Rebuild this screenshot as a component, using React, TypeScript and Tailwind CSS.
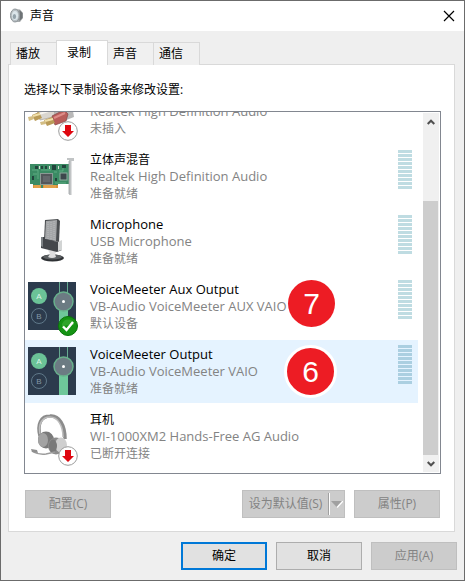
import type { ReactNode } from "react";

function Arrow({ up = false }: { up?: boolean }) {
  return (
    <svg viewBox="0 0 8 6" className="h-[6px] w-[8px]" aria-hidden="true">
      <path d={up ? "M0.7 5 4 1.7 7.3 5" : "M0.7 1 4 4.3 7.3 1"} fill="none" stroke="#505050" strokeWidth="2" />
    </svg>
  );
}

function SpeakerIcon() {
  return (
    <svg viewBox="0 0 14 16" className="h-4 w-[14px]" aria-hidden="true">
      <path d="M5 1 10 1.5 13 5 13 10 10 14 5 14Z" fill="#a9adaf" />
      <path d="M9.500 2 12.5 5 12.5 10 9.500 13Z" fill="#6e7376" />
      <ellipse cx="5" cy="7.5" rx="4.5" ry="6.5" fill="#b9c0c4" stroke="#8f969a" />
      <ellipse cx="5" cy="7.5" rx="3" ry="4.6" fill="#dbe5ea" />
      <ellipse cx="4.4" cy="8.5" rx="1.7" ry="2.5" fill="#94a2aa" />
    </svg>
  );
}

function CableIcon() {
  return (
    <svg viewBox="0 0 48 48" className="size-12" aria-hidden="true">
      <path d="M22 23 44 18 46 30 36 34 24 30Z" fill="#b9b9b9" />
      <path d="M9 24 22 20 27 26 25 30 12 33Z" fill="#d9d6d0" stroke="#aaa69e" strokeWidth="0.8" />
      <path d="M11 27 24 23" stroke="#f6f4f0" strokeWidth="2" />
      <path d="M4 28 11 25 14 31 7 34Z" fill="#b99b58" />
      <path d="M5 29 12 27" stroke="#f0dfaa" strokeWidth="2" />
      <path d="M0 30 5 29 6 32 1 34Z" fill="#d3bd83" />
      <path d="M24 29 36 23 40 27 38 34 27 38Z" fill="#b95d5a" stroke="#8d4e4e" strokeWidth="0.8" />
      <path d="M26 31 37 26" stroke="#de8c88" strokeWidth="2" />
      <path d="M16 33 24 30 27 36 19 39Z" fill="#b99b58" />
      <path d="M17 34 25 32" stroke="#f0dfaa" strokeWidth="2" />
      <path d="M12 35 17 34 18 37 13 38Z" fill="#d3bd83" />
    </svg>
  );
}

function CardIcon() {
  return (
    <svg viewBox="0 0 48 48" className="size-12" aria-hidden="true">
      <path d="M2 12H41V32H30V36H5V32H2Z" fill="#3b8b64" />
      <path d="M5 33H13V36H5ZM15 33H30V36H15Z" fill="#db9239" />
      <path d="M7 33V36M9 33V36M11 33V36M17 33V36M19 33V36M21 33V36M23 33V36M25 33V36M27 33V36" stroke="#f1c574" strokeWidth="0.6" />
      <path d="M4 18H10V27M13 18H23M31 19H35V16M27 31H38M5 22H9M26 20H29" fill="none" stroke="#67b58c" strokeWidth="0.8" />
      <rect x="12.5" y="21.5" width="12" height="11" fill="#53575b" stroke="#8a9a94" />
      <rect x="15" y="24" width="7" height="6" fill="#64686c" />
      <rect x="32" y="21" width="7" height="7" fill="#3d474c" stroke="#8fae9f" />
      <path d="M7 14H10V17H7ZM13 14H15V17H13ZM17 14H19V17H17ZM24 13H28V18H24ZM34 13H38V16H34ZM4 24H6V28H4ZM27 26H29V29H27Z" fill="#23443d" />
      <path d="M11.500 14V17M21.500 14V17M30.500 14V17" stroke="#d5e2d5" />
      <path d="M39 6H46V9H43.500V43H41V8H39Z" fill="#c1c4c5" />
      <path d="M41 9V42" stroke="#9da1a3" strokeWidth="0.8" />
    </svg>
  );
}

function MicrophoneIcon() {
  return (
    <svg viewBox="0 0 48 48" className="size-12" aria-hidden="true">
      <ellipse cx="24.500" cy="41" rx="11.500" ry="3.500" fill="#2e3134" />
      <ellipse cx="24.500" cy="40" rx="9.500" ry="2.500" fill="#5c6063" />
      <path d="M20 33 29 34 27 37 28 40Q24 42 20 40L22 37Z" fill="#dededf" />
      <path d="M17 3 30 2 32 4 31 25 16 23Z" fill="#4b4e51" />
      <path d="M18 4 29 3 28 24 17 22Z" fill="#a4a6a8" />
      <path d="M20 5V22M23 5V22M26 4V23" stroke="#b9bbbd" strokeDasharray="1 1" />
      <path d="M13 20 17 20 17 22 30 25 34 25 34 33 29 35 13 31Z" fill="#44474b" />
      <path d="M30 25 34 23 34 33 30 34Z" fill="#d2d4d4" />
      <path d="M13 20 15 20 15 30 13 29Z" fill="#7d8285" />
    </svg>
  );
}

function MixerIcon() {
  return (
    <svg viewBox="0 0 48 48" className="size-12" aria-hidden="true">
      <path d="M0 0H48V48H0Z" fill="#2c3b4d" />
      <circle cx="11" cy="14" r="8" fill="#6bc397" />
      <circle cx="11" cy="34" r="7.5" fill="none" stroke="#60798a" />
      <text x="11" y="17" textAnchor="middle" fontSize="8" fontFamily="Liberation Sans, sans-serif" fill="#dcf5e8">A</text>
      <text x="11" y="37" textAnchor="middle" fontSize="8" fontFamily="Liberation Sans, sans-serif" fill="#8397a5">B</text>
      <path d="M31.5 0V25M39.5 0V25" stroke="#66a990" />
      <path d="M31 24H40V48H31Z" fill="#6ec79a" />
      <circle cx="35.500" cy="19.500" r="9.500" fill="#6c7b83" stroke="#68b08c" strokeWidth="1.5" />
      <circle cx="35.500" cy="19.500" r="1.500" fill="#ffffff" />
    </svg>
  );
}

function HeadsetIcon() {
  return (
    <svg viewBox="0 0 48 48" className="size-12" aria-hidden="true">
      <path d="M12 24C9 12 13 4 22 4 31 3 37 13 37 27" fill="none" stroke="#8c8c8c" strokeWidth="3.500" />
      <path d="M12 22C10 12 14 5 22 5 30 5 35 14 35 25" fill="none" stroke="#bdbdbd" strokeWidth="1.500" />
      <ellipse cx="18" cy="28" rx="8" ry="8.500" fill="#7a7a7a" />
      <ellipse cx="15" cy="28" rx="5" ry="7" fill="#a3a3a3" />
      <ellipse cx="28" cy="34" rx="8" ry="8.500" fill="#8c8c8c" />
      <ellipse cx="33" cy="33" rx="6" ry="7.500" fill="#cfcfcf" />
      <ellipse cx="25" cy="34" rx="4" ry="6.500" fill="#797979" />
      <path d="M4 39Q10 43 18 42L27 40" fill="none" stroke="#9c9c9c" strokeWidth="1.500" />
      <path d="M3 37 9 38 10 41 4 40Z" fill="#8f8f8f" />
    </svg>
  );
}

function StatusBadge({ kind }: { kind: "down" | "ok" }) {
  return (
    <svg viewBox="0 0 20 20" className="absolute top-[34px] left-[30px] size-5" aria-hidden="true">
      {kind === "ok" ? (
        <>
          <circle cx="10" cy="10" r="9.500" fill="#159414" stroke="#087508" />
          <path d="M4 8Q7 1 15 5L16 9Q10 8 4 11Z" fill="#2fa42b" />
          <path d="M5 10.500 8.500 14 15 6" fill="none" stroke="#ffffff" strokeWidth="2.400" />
        </>
      ) : (
        <>
          <circle cx="10" cy="10" r="9.300" fill="#ffffff" stroke="#9b9b9b" />
          <path d="M7 4H13V10H16L10 16 4 10H7Z" fill="#df0710" />
        </>
      )}
    </svg>
  );
}

function Meter({ selected }: { selected: boolean }) {
  return (
    <div className="mt-[5px] mr-[6px] flex flex-col gap-px self-start" aria-hidden="true">
      {Array.from({ length: 10 }, (_, i) => (
        <span key={i} className={`block h-[3px] w-[14px] ${selected ? "bg-[#abcfe1]" : "bg-[#bfdce2]"}`} />
      ))}
    </div>
  );
}

type Device = {
  id: string;
  name?: string;
  driver: string;
  state: string;
  icon: ReactNode;
  badge?: "down" | "ok";
  meter?: boolean;
  selected?: boolean;
  mark?: ReactNode;
};

const devices: Device[] = [
  { id: "line", driver: "Realtek High Definition Audio", state: "未插入", icon: <CableIcon />, badge: "down" },
  { id: "mix", name: "立体声混音", driver: "Realtek High Definition Audio", state: "准备就绪", icon: <CardIcon />, meter: true },
  { id: "usb", name: "Microphone", driver: "USB Microphone", state: "准备就绪", icon: <MicrophoneIcon />, meter: true },
  {
    id: "aux",
    name: "VoiceMeeter Aux Output",
    driver: "VB-Audio VoiceMeeter AUX VAIO",
    state: "默认设备",
    icon: <MixerIcon />,
    badge: "ok",
    meter: true,
    mark: <Mark className="top-[5px] left-[263px] size-[47px]">7</Mark>,
  },
  {
    id: "vaio",
    name: "VoiceMeeter Output",
    driver: "VB-Audio VoiceMeeter VAIO",
    state: "准备就绪",
    icon: <MixerIcon />,
    meter: true,
    selected: true,
    mark: <Mark className="top-[5px] left-[259px] size-[53px] border-3 border-white">6</Mark>,
  },
  { id: "headset", name: "耳机", driver: "WI-1000XM2 Hands-Free AG Audio", state: "已断开连接", icon: <HeadsetIcon />, badge: "down" },
];

function Mark({ className, children }: { className: string; children: ReactNode }) {
  return (
    <span
      className={`absolute z-10 flex items-center justify-center rounded-full bg-[#ed1c24] font-['Liberation_Sans',sans-serif] text-[30px] leading-none text-white ${className}`}
    >
      {children}
    </span>
  );
}

function DeviceRow({ device }: { device: Device }) {
  return (
    <li role="option" aria-selected={!!device.selected} className="relative h-[65px]">
      <div className={`flex h-[63px] ${device.selected ? "bg-[#e5f3ff]" : ""}`}>
        <div className="relative mt-[7px] ml-[3px] size-12 shrink-0">
          {device.icon}
          {device.badge && <StatusBadge kind={device.badge} />}
        </div>
        <div className="mt-[6px] ml-[14px] min-w-0 flex-1 leading-[17px] whitespace-nowrap text-[#838383]">
          <p className={`h-[17px] text-black ${/[a-z]/.test(device.name ?? "") ? "text-[13px]" : "text-[12px]"}`}>
            {device.name}
          </p>
          <p className="text-[13px]">{device.driver}</p>
          <p className="text-[12px]">{device.state}</p>
        </div>
        {device.meter && <Meter selected={!!device.selected} />}
      </div>
      {device.mark}
    </li>
  );
}

const buttonBase = "h-7 w-[86px] border text-[12px] leading-none";
const buttonOff = "border-[#bfbfbf] bg-[#cccccc] text-[#838383]";

const tabs = ["播放", "录制", "声音", "通信"];

export default function App() {
  return (
    <main className="border border-[#6b6b6b] bg-[#efefef] font-['Open_Sans','Noto_Sans_CJK_SC',sans-serif] text-[12px] text-black">
      <header className="flex h-[30px] items-center bg-white px-[9px]">
        <SpeakerIcon />
        <h1 className="ml-[6px] flex-1">声音</h1>
        <button type="button" aria-label="关闭" className="flex size-3 items-center justify-center">
          <svg viewBox="0 0 12 12" className="size-3">
            <path d="M1 1 11 11M11 1 1 11" stroke="#000000" strokeWidth="1.2" />
          </svg>
        </button>
      </header>

      <div className="px-[7px] pt-[9px] pb-[10px]">
        <div role="tablist" className="relative z-10 flex items-end pl-[2px]">
          {tabs.map((tab) => (
            <button
              key={tab}
              type="button"
              role="tab"
              aria-selected={tab === "录制"}
              className={
                tab === "录制"
                  ? "-mr-px h-[25px] w-[52px] border border-b-0 border-[#d9d9d9] bg-white pr-[6px]"
                  : "-mr-px h-[23px] w-[47px] border border-b-0 border-[#d9d9d9] bg-[#f0f0f0] pr-[11px]"
              }
            >
              {tab}
            </button>
          ))}
        </div>

        <section role="tabpanel" className="-mt-px mr-[2px] border border-[#d9d9d9] bg-white px-[15px] pt-4 pb-[13px]">
          <p className="mb-3 leading-[18px]" id="device-label">
            选择以下录制设备来修改设置:
          </p>
          <div className="mr-[-2px] flex h-[363px] border border-[#828790]">
            <div className="min-w-0 flex-1 overflow-hidden">
              <ul role="listbox" aria-labelledby="device-label" className="-mt-8">
                {devices.map((device) => (
                  <DeviceRow key={device.id} device={device} />
                ))}
              </ul>
            </div>
            <div className="my-px mr-px ml-[5px] flex w-4 flex-col bg-[#f0f0f0]">
              <button type="button" aria-label="向上滚动" className="flex h-[17px] items-center justify-center">
                <Arrow up />
              </button>
              <div className="flex-1 pt-[71px] pr-px">
                <div className="h-full bg-[#cdcdcd]" />
              </div>
              <button type="button" aria-label="向下滚动" className="flex h-[17px] items-center justify-center">
                <Arrow />
              </button>
            </div>
          </div>

          <div className="mt-4 mr-[-1px] ml-px flex">
            <button type="button" disabled className={`${buttonBase} ${buttonOff}`}>
              配置(C)
            </button>
            <div className="ml-auto flex h-7 w-[103px] border border-[#bfbfbf] bg-[#cccccc] text-[#838383]">
              <button type="button" disabled className="flex-1 whitespace-nowrap">
                设为默认值(S)
              </button>
              <button
                type="button"
                disabled
                aria-label="更多默认值选项"
                className="my-[2px] flex w-4 items-center justify-center border-l border-[#a0a0a0] shadow-[inset_1px_0_0_#ffffff]"
              >
                <svg viewBox="0 0 12 8" className="h-2 w-3">
                  <path d="M1 1H12V2L6.500 8Z" fill="#ffffff" />
                  <path d="M0 1H11L5.500 7Z" fill="#a0a0a0" />
                </svg>
              </button>
            </div>
            <button type="button" disabled className={`${buttonBase} ${buttonOff} ml-[9px]`}>
              属性(P)
            </button>
          </div>
        </section>

        <footer className="mt-[10px] flex justify-end gap-[9px]">
          <button type="button" className={`${buttonBase} border-2 border-[#0078d7] bg-[#e1e1e1]`}>
            确定
          </button>
          <button type="button" className={`${buttonBase} border-[#adadad] bg-[#e1e1e1]`}>
            取消
          </button>
          <button type="button" disabled className={`${buttonBase} ${buttonOff}`}>
            应用(A)
          </button>
        </footer>
      </div>
    </main>
  );
}
